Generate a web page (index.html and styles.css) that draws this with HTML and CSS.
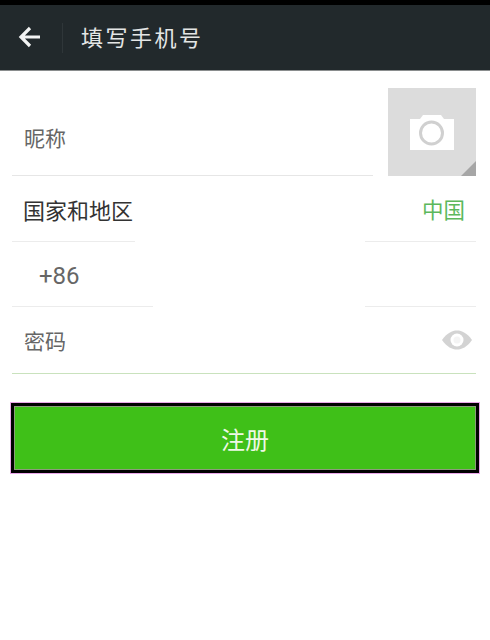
FILE: index.html
```html
<!DOCTYPE html>
<html lang="zh">
<head>
<meta charset="utf-8">
<title>填写手机号</title>
<link rel="stylesheet" href="styles.css">
</head>
<body>
<div class="page">
  <div class="statusbar"></div>
  <header class="topbar">
    <svg class="back" width="26" height="24" viewBox="0 0 26 24"><path d="M23 12H4M13 3l-9 9 9 9" fill="none" stroke="#f2f3f3" stroke-width="3.2"/></svg>
    <span class="divider"></span>
    <h1 class="title">填写手机号</h1>
  </header>
  <section class="nick">
    <div class="nick-field"><span class="label">昵称</span></div>
    <div class="photo">
      <svg width="44" height="36" viewBox="0 0 44 36"><path d="M0 5h10l3-4h18l3 4h10v31H0z" fill="#fff"/><circle cx="21.500" cy="19" r="11" fill="none" stroke="#d0d0d0" stroke-width="3"/></svg>
      <span class="corner"></span>
    </div>
  </section>
  <section class="country">
    <span class="label-dark">国家和地区</span>
    <span class="china">中国</span>
  </section>
  <section class="phone">
    <div class="rule"><i class="seg-a"></i><i class="seg-b"></i></div>
    <div class="phone-code">+86</div>
    <div class="rule"><i class="seg-c"></i><i class="seg-b"></i></div>
  </section>
  <section class="password">
    <span class="label">密码</span>
    <svg width="32" height="20" viewBox="0 0 32 20"><path d="M1 10C6 3 11 .5 16 .5S26 3 31 10c-5 7-10 9.500-15 9.500S6 17 1 10z" fill="#d3d3d3"/><circle cx="16" cy="10" r="6.500" fill="#fff"/><circle cx="16" cy="10" r="3.500" fill="#d3d3d3" opacity=".25"/></svg>
  </section>
  <button class="register">注册</button>
</div>
</body>
</html>
```
FILE: styles.css
```css
* { box-sizing: border-box; }
html, body { margin: 0; padding: 0; background: #fff; }
.page {
  width: 490px;
  height: 640px;
  overflow: hidden;
  font-family: "Noto Sans CJK SC", "Noto Sans", sans-serif;
  color: #666;
}
.statusbar { height: 5px; background: #000; }
.topbar {
  height: 66px;
  background: #22292c;
  border-bottom: 1px solid #8a8d8e;
  display: flex;
  align-items: center;
  padding-left: 17px;
}
.back { flex: none; margin-top: -2px; }
.divider { width: 1px; height: 30px; margin-left: 19px; background: #2f3639; }
.title {
  margin: -3px 0 0 18px;
  font-size: 22px;
  font-weight: 400;
  letter-spacing: 2.500px;
  color: #e4e6e6;
}
.nick {
  display: flex;
  align-items: flex-end;
  margin-top: 17px;
  padding: 0 14px 0 12px;
  height: 88px;
}
.nick-field {
  flex: 1;
  height: 60px;
  margin-right: 15px;
  padding: 6px 0 0 12px;
  border-bottom: 1px solid #e6e6e6;
}
.label { font-size: 21px; line-height: 30px; color: #666; }
.photo {
  position: relative;
  width: 88px;
  height: 88px;
  background: #dcdcdc;
  display: flex;
  align-items: center;
  justify-content: center;
}
.corner {
  position: absolute;
  right: 0;
  bottom: 0;
  width: 0;
  height: 0;
  border-style: solid;
  border-width: 0 0 15px 15px;
  border-color: transparent transparent #a6a6a6 transparent;
}
.country {
  display: flex;
  justify-content: space-between;
  align-items: center;
  height: 65px;
  padding: 0 25px 0 23px;
}
.label-dark { font-size: 22px; color: #333; }
.china { font-size: 21.500px; color: #5cb85c; }
.phone { padding: 0 14px 0 12px; }
.rule { display: flex; justify-content: space-between; height: 1px; }
.rule i { display: block; height: 1px; background: #ececec; }
.seg-a { width: 123px; }
.seg-b { width: 111px; }
.seg-c { width: 141px; }
.phone-code {
  height: 64px;
  padding-left: 27px;
  font-family: "Roboto", "Liberation Sans", sans-serif;
  font-size: 24px;
  line-height: 69px;
  color: #666;
}
.password {
  display: flex;
  justify-content: space-between;
  align-items: center;
  height: 67px;
  margin: 0 14px 0 12px;
  padding: 0 3px 0 12px;
  border-bottom: 1px solid #c9e2bd;
}
.register {
  display: block;
  width: 470px;
  height: 72px;
  margin: 28px 0 0 10px;
  padding: 0;
  background: #3fc018;
  border: 4px solid #000;
  outline: 1px solid #e9a6e9;
  outline-offset: -1px;
  box-shadow: inset 0 0 0 1px #8d9a7c;
  font-family: inherit;
  font-size: 24px;
  color: #eef8e6;
}
```
